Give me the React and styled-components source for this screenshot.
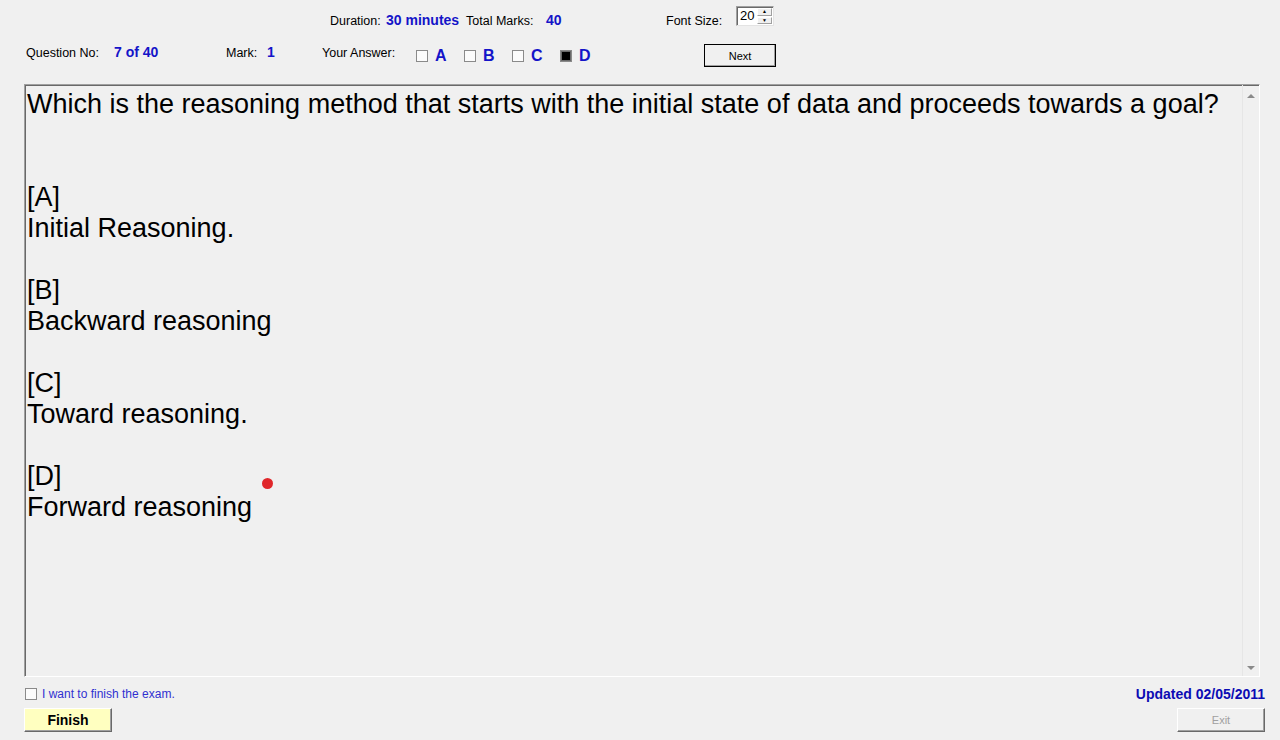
import React from "react";
import styled, { createGlobalStyle } from "styled-components";

const GlobalStyle = createGlobalStyle`
  html, body {
    margin: 0;
    padding: 0;
    background: #f0f0f0;
  }
  body {
    font-family: "Liberation Sans", Arial, sans-serif;
    color: #000;
  }
`;

const Page = styled.div`
  width: 1280px;
  height: 740px;
  overflow: hidden;
  display: flex;
  flex-direction: column;
  background: #f0f0f0;
`;

const TopRow = styled.div`
  display: flex;
  align-items: flex-start;
  height: 44px;
  padding: 6px 0 0 330px;
  box-sizing: border-box;
`;

const InfoRow = styled.div`
  display: flex;
  align-items: flex-start;
  height: 40px;
  padding-left: 26px;
`;

const Cell = styled.div`
  width: ${(p) => p.$w}px;
  flex: none;
  margin-top: ${(p) => (p.$top ? p.$top : 0)}px;
  line-height: 14px;
  white-space: nowrap;
`;

const Label = styled.span`
  font-size: 12.5px;
  color: #000;
`;

const Value = styled.span`
  font-size: 14px;
  font-weight: bold;
  color: #1414c8;
`;

const Spinner = styled.div`
  width: 38px;
  height: 20px;
  box-sizing: border-box;
  display: flex;
  background: #fff;
  border: 1px solid;
  border-color: #a0a0a0 #e3e3e3 #e3e3e3 #a0a0a0;
  box-shadow: inset 1px 1px 0 #696969;
`;

const SpinValue = styled.div`
  flex: 1;
  font-size: 13px;
  line-height: 18px;
  padding-left: 3px;
`;

const SpinButtons = styled.div`
  width: 15px;
  display: flex;
  flex-direction: column;
  padding: 1px 1px 1px 0;
  gap: 1px;
`;

const SpinButton = styled.div`
  flex: 1;
  background: #f0f0f0;
  border: 1px solid;
  border-color: #fff #a0a0a0 #a0a0a0 #fff;
  display: flex;
  align-items: center;
  justify-content: center;
  font-size: 5px;
  line-height: 1;
  color: #000;
`;

const Options = styled.div`
  display: flex;
  margin-top: 4px;
`;

const Option = styled.div`
  width: 48px;
  height: 16px;
  display: flex;
  align-items: center;
  gap: 7px;
`;

const Box = styled.span`
  width: ${(p) => p.$size || 12}px;
  height: ${(p) => p.$size || 12}px;
  box-sizing: border-box;
  flex: none;
  border: 1px solid #8a8a8a;
  background: ${(p) => (p.$checked ? "#000" : "#fbfbfb")};
  box-shadow: ${(p) => (p.$checked ? "inset 0 0 0 1px #6a6a6a" : "none")};
`;

const Letter = styled.span`
  font-size: 16px;
  font-weight: bold;
  color: #1414c8;
  line-height: 16px;
`;

const Button = styled.button`
  width: ${(p) => p.$w}px;
  height: ${(p) => p.$h}px;
  margin: 0;
  padding: 0;
  box-sizing: border-box;
  font-family: "Liberation Sans", Arial, sans-serif;
  font-size: ${(p) => (p.$bold ? 14 : 11)}px;
  font-weight: ${(p) => (p.$bold ? "bold" : "normal")};
  color: ${(p) => (p.disabled ? "#a0a0a0" : "#000")};
  background: ${(p) => p.$bg || "#f0f0f0"};
  border: 1px solid;
  border-color: #fff #696969 #696969 #fff;
  box-shadow: inset -1px -1px 0 #a0a0a0;
  outline: ${(p) => (p.$framed ? "1px solid #000" : "none")};
  outline-offset: -1px;
  cursor: default;
`;

const NextWrap = styled.div`
  margin-left: 96px;
`;

const TextPanel = styled.div`
  margin-left: 24px;
  width: 1236px;
  height: 593px;
  box-sizing: border-box;
  display: flex;
  border: 1px solid;
  border-color: #a0a0a0 #fff #fff #a0a0a0;
  box-shadow: inset 1px 1px 0 #696969;
`;

const Content = styled.div`
  position: relative;
  flex: 1;
  padding: 4px 0 0 2px;
  font-size: 27px;
  line-height: 31px;
  color: #000;
`;

const Line = styled.div`
  height: 31px;
  white-space: nowrap;
`;

const Dot = styled.span`
  position: absolute;
  left: 237px;
  top: 393px;
  width: 11px;
  height: 11px;
  border-radius: 50%;
  background: #e0262a;
`;

const ScrollBar = styled.div`
  width: 16px;
  display: flex;
  flex-direction: column;
  justify-content: space-between;
  align-items: center;
  border-left: 1px solid #e6e6e6;
  padding: 9px 0 6px;
`;

const Arrow = styled.span`
  width: 0;
  height: 0;
  border-left: 4px solid transparent;
  border-right: 4px solid transparent;
  ${(p) =>
    p.$down
      ? "border-top: 4px solid #8a8a8a;"
      : "border-bottom: 4px solid #8a8a8a;"}
`;

const Footer = styled.div`
  display: flex;
  flex-direction: column;
  padding: 10px 15px 0 24px;
  gap: 7px;
`;

const FooterRow = styled.div`
  display: flex;
  justify-content: space-between;
  align-items: center;
  height: ${(p) => p.$h}px;
`;

const Confirm = styled.label`
  display: flex;
  align-items: center;
  gap: 5px;
  padding-left: 1px;
  font-size: 12px;
  color: #3030d0;
`;

const Updated = styled.span`
  font-size: 14px;
  font-weight: bold;
  color: #0c0cb4;
`;

const lines = [
  "Which is the reasoning method that starts with the initial state of data and proceeds towards a goal?",
  "",
  "",
  "[A]",
  "Initial Reasoning.",
  "",
  "[B]",
  "Backward reasoning",
  "",
  "[C]",
  "Toward reasoning.",
  "",
  "[D]",
  "Forward reasoning",
];

const answers = [
  { key: "A", checked: false },
  { key: "B", checked: false },
  { key: "C", checked: false },
  { key: "D", checked: true },
];

export default function App() {
  return (
    <Page>
      <GlobalStyle />
      <TopRow>
        <Cell $w={56} $top={7}>
          <Label>Duration:</Label>
        </Cell>
        <Cell $w={80} $top={7}>
          <Value>30 minutes</Value>
        </Cell>
        <Cell $w={80} $top={7}>
          <Label>Total Marks:</Label>
        </Cell>
        <Cell $w={120} $top={7}>
          <Value>40</Value>
        </Cell>
        <Cell $w={70} $top={7}>
          <Label>Font Size:</Label>
        </Cell>
        <Spinner>
          <SpinValue>20</SpinValue>
          <SpinButtons>
            <SpinButton>▲</SpinButton>
            <SpinButton>▼</SpinButton>
          </SpinButtons>
        </Spinner>
      </TopRow>

      <InfoRow>
        <Cell $w={88} $top={1}>
          <Label>Question No:</Label>
        </Cell>
        <Cell $w={112} $top={1}>
          <Value>7 of 40</Value>
        </Cell>
        <Cell $w={41} $top={1}>
          <Label>Mark:</Label>
        </Cell>
        <Cell $w={55} $top={1}>
          <Value>1</Value>
        </Cell>
        <Cell $w={94} $top={1}>
          <Label>Your Answer:</Label>
        </Cell>
        <Options>
          {answers.map((a) => (
            <Option key={a.key}>
              <Box $checked={a.checked} />
              <Letter>{a.key}</Letter>
            </Option>
          ))}
        </Options>
        <NextWrap>
          <Button $w={72} $h={23} $framed>
            Next
          </Button>
        </NextWrap>
      </InfoRow>

      <TextPanel>
        <Content>
          {lines.map((text, i) => (
            <Line key={i}>{text}</Line>
          ))}
          <Dot />
        </Content>
        <ScrollBar>
          <Arrow />
          <Arrow $down />
        </ScrollBar>
      </TextPanel>

      <Footer>
        <FooterRow $h={14}>
          <Confirm>
            <Box $size={12} />I want to finish the exam.
          </Confirm>
          <Updated>Updated 02/05/2011</Updated>
        </FooterRow>
        <FooterRow $h={24}>
          <Button $w={88} $h={24} $bold $bg="#ffffc0">
            Finish
          </Button>
          <Button $w={88} $h={24} disabled>
            Exit
          </Button>
        </FooterRow>
      </Footer>
    </Page>
  );
}
